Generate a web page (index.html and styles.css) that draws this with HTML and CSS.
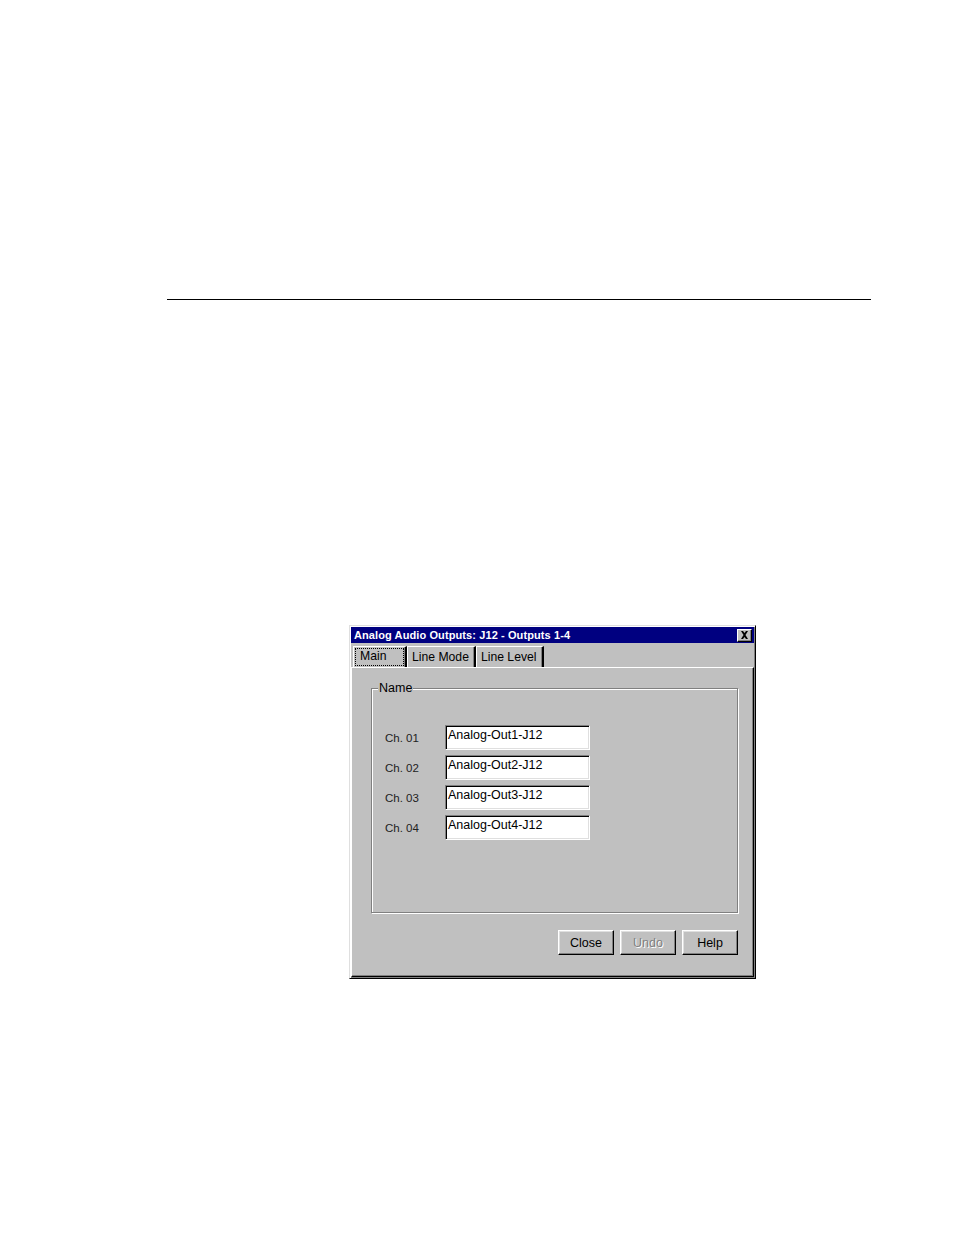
FILE: index.html
```html
<!DOCTYPE html>
<html>
<head>
<meta charset="utf-8">
<title>Analog Audio Outputs</title>
<link rel="stylesheet" href="styles.css">
</head>
<body>
<div class="page">
  <div class="rule"></div>
  <div class="dialog">
    <div class="titlebar">
      <span class="title">Analog Audio Outputs: J12 - Outputs 1-4</span>
      <span class="xbtn"><svg width="9" height="8" viewBox="0 0 9 8"><path d="M1 0h2l1.5 2L6 0h2L5.5 4 8 8H6L4.5 6 3 8H1l2.5-4z" fill="#000"/></svg></span>
    </div>
    <div class="tabs">
      <div class="tab active"><span class="focus">Main</span></div>
      <div class="tab">Line Mode</div>
      <div class="tab">Line Level</div>
    </div>
    <div class="panel">
      <div class="group">
        <span class="legend">Name</span>
        <div class="rows">
          <div class="row"><span class="lbl">Ch. 01</span><span class="field">Analog-Out1-J12</span></div>
          <div class="row"><span class="lbl">Ch. 02</span><span class="field">Analog-Out2-J12</span></div>
          <div class="row"><span class="lbl">Ch. 03</span><span class="field">Analog-Out3-J12</span></div>
          <div class="row"><span class="lbl">Ch. 04</span><span class="field">Analog-Out4-J12</span></div>
        </div>
      </div>
      <div class="buttons">
        <span class="btn">Close</span>
        <span class="btn disabled">Undo</span>
        <span class="btn">Help</span>
      </div>
    </div>
  </div>
</div>
</body>
</html>
```

FILE: styles.css
```css
* { box-sizing: border-box; }
html, body { margin: 0; padding: 0; background: #fff; }
body { font-family: "Liberation Sans", Arial, sans-serif; font-size: 12px; color: #000; }
.page { width: 954px; min-height: 1235px; padding-top: 299px; }
.rule { height: 1px; background: #000; margin-left: 167px; width: 704px; }
.dialog {
  margin: 325px 0 0 349px;
  width: 407px;
  background: #c0c0c0;
  border: 1px solid;
  border-color: #dfdfdf #000 #000 #dfdfdf;
  box-shadow: inset 1px 1px #fff, inset -1px -1px #808080;
  padding: 1px;
}
.titlebar {
  height: 16px;
  background: #000080;
  display: flex;
  align-items: center;
  justify-content: space-between;
  padding: 0 2px 0 3px;
}
.title { color: #fff; font-weight: bold; font-size: 11px; letter-spacing: 0.1px; }
.xbtn {
  width: 15px; height: 13px;
  background: #c0c0c0;
  border: 1px solid; border-color: #fff #000 #000 #fff;
  box-shadow: inset -1px -1px #808080;
  display: flex; align-items: center; justify-content: center;
  padding-bottom: 1px;
}
.tabs { display: flex; margin-top: 2px; padding-left: 2px; height: 22px; align-items: flex-end; }
.tab {
  height: 21px;
  border-left: 1px solid #fff;
  border-top: 1px solid #fff;
  border-right: 2px solid #000;
  box-shadow: inset -1px 0 #808080;
  padding: 2px 5px 0 4px;
  line-height: 17px;
  white-space: nowrap;
  font-size: 12.2px;
}
.tab.active { width: 54px; padding: 1px 1px 0 1px; }
.focus { display: block; border: 1px dotted #000; height: 18px; line-height: 15px; padding-left: 4px; }
.panel {
  border: 1px solid;
  border-color: #fff #000 #000 #fff;
  box-shadow: inset -1px -1px #808080;
  padding: 20px 15px 21px 19px;
  height: 310px;
}
.group {
  width: 367px;
  height: 225px;
  border: 1px solid #808080;
  box-shadow: inset 1px 1px #fff, 1px 1px #fff;
  padding: 36px 0 0 13px;
  position: relative;
}
.legend {
  position: absolute;
  top: -8px;
  left: 6px;
  padding: 0 1px;
  background: #c0c0c0;
  line-height: 14px;
  font-size: 12.5px;
}
.rows { display: flex; flex-direction: column; gap: 5px; }
.row { display: flex; align-items: center; height: 25px; }
.lbl { width: 60px; color: #222; font-size: 11.5px; padding-top: 1px; }
.field {
  width: 145px; height: 25px;
  background: #fff;
  border: 1px solid; border-color: #808080 #fff #fff #808080;
  box-shadow: inset 1px 1px #000, inset -1px -1px #dfdfdf;
  padding: 2px 0 0 2px;
  line-height: 15px;
  font-size: 12.5px;
}
.buttons { display: flex; justify-content: flex-end; gap: 6px; margin-top: 17px; }
.btn {
  width: 56px; height: 25px;
  border: 1px solid; border-color: #fff #000 #000 #fff;
  box-shadow: inset -1px -1px #808080, inset 1px 1px #dfdfdf;
  display: flex; align-items: center; justify-content: center;
  font-size: 12.5px;
}
.btn.disabled { color: #808080; text-shadow: 1px 1px #fff; }
```
